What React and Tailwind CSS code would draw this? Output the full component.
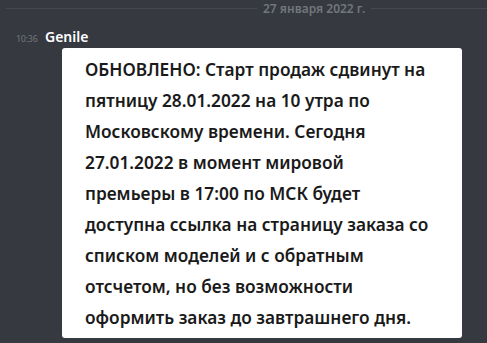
export default function App() {
  const lines = [
    "ОБНОВЛЕНО: Старт продаж сдвинут на",
    "пятницу 28.01.2022 на 10 утра по",
    "Московскому времени. Сегодня",
    "27.01.2022 в момент мировой",
    "премьеры в 17:00 по МСК будет",
    "доступна ссылка на страницу заказа со",
    "списком моделей и с обратным",
    "отсчетом, но без возможности",
    "оформить заказ до завтрашнего дня.",
  ];
  return (
    <div className="w-[487px] h-[343px] overflow-hidden bg-[#36393f] flex flex-col" style={{ fontFamily: '"Noto Sans", sans-serif' }}>
      <div className="flex items-center h-[17px] shrink-0 pl-[6px]">
        <div className="w-[251px] h-px bg-[#46494f]" />
        <span className="px-[6px] text-[12px] font-semibold text-[#72767d] leading-[17px] whitespace-nowrap">27 января 2022 г.</span>
        <div className="flex-1 h-px bg-[#46494f]" />
      </div>
      <div className="flex items-baseline mt-[11px] pl-[16px] h-[18px] shrink-0">
        <span className="w-[29px] text-[9px] text-[#72767d] leading-[18px] tracking-[-0.3px]">10:36</span>
        <span className="text-[14px] font-semibold text-white leading-[18px]">Genile</span>
      </div>
      <div className="ml-[62px] mt-[2px] w-[400px] h-[290px] shrink-0 bg-white rounded-[3px] pl-[23px] pt-[6px]">
        {lines.map((l, i) => (
          <div key={i} className="text-[17.3px] leading-[31px] font-semibold text-[#1a1a1a] whitespace-nowrap">
            {l}
          </div>
        ))}
      </div>
    </div>
  );
}
